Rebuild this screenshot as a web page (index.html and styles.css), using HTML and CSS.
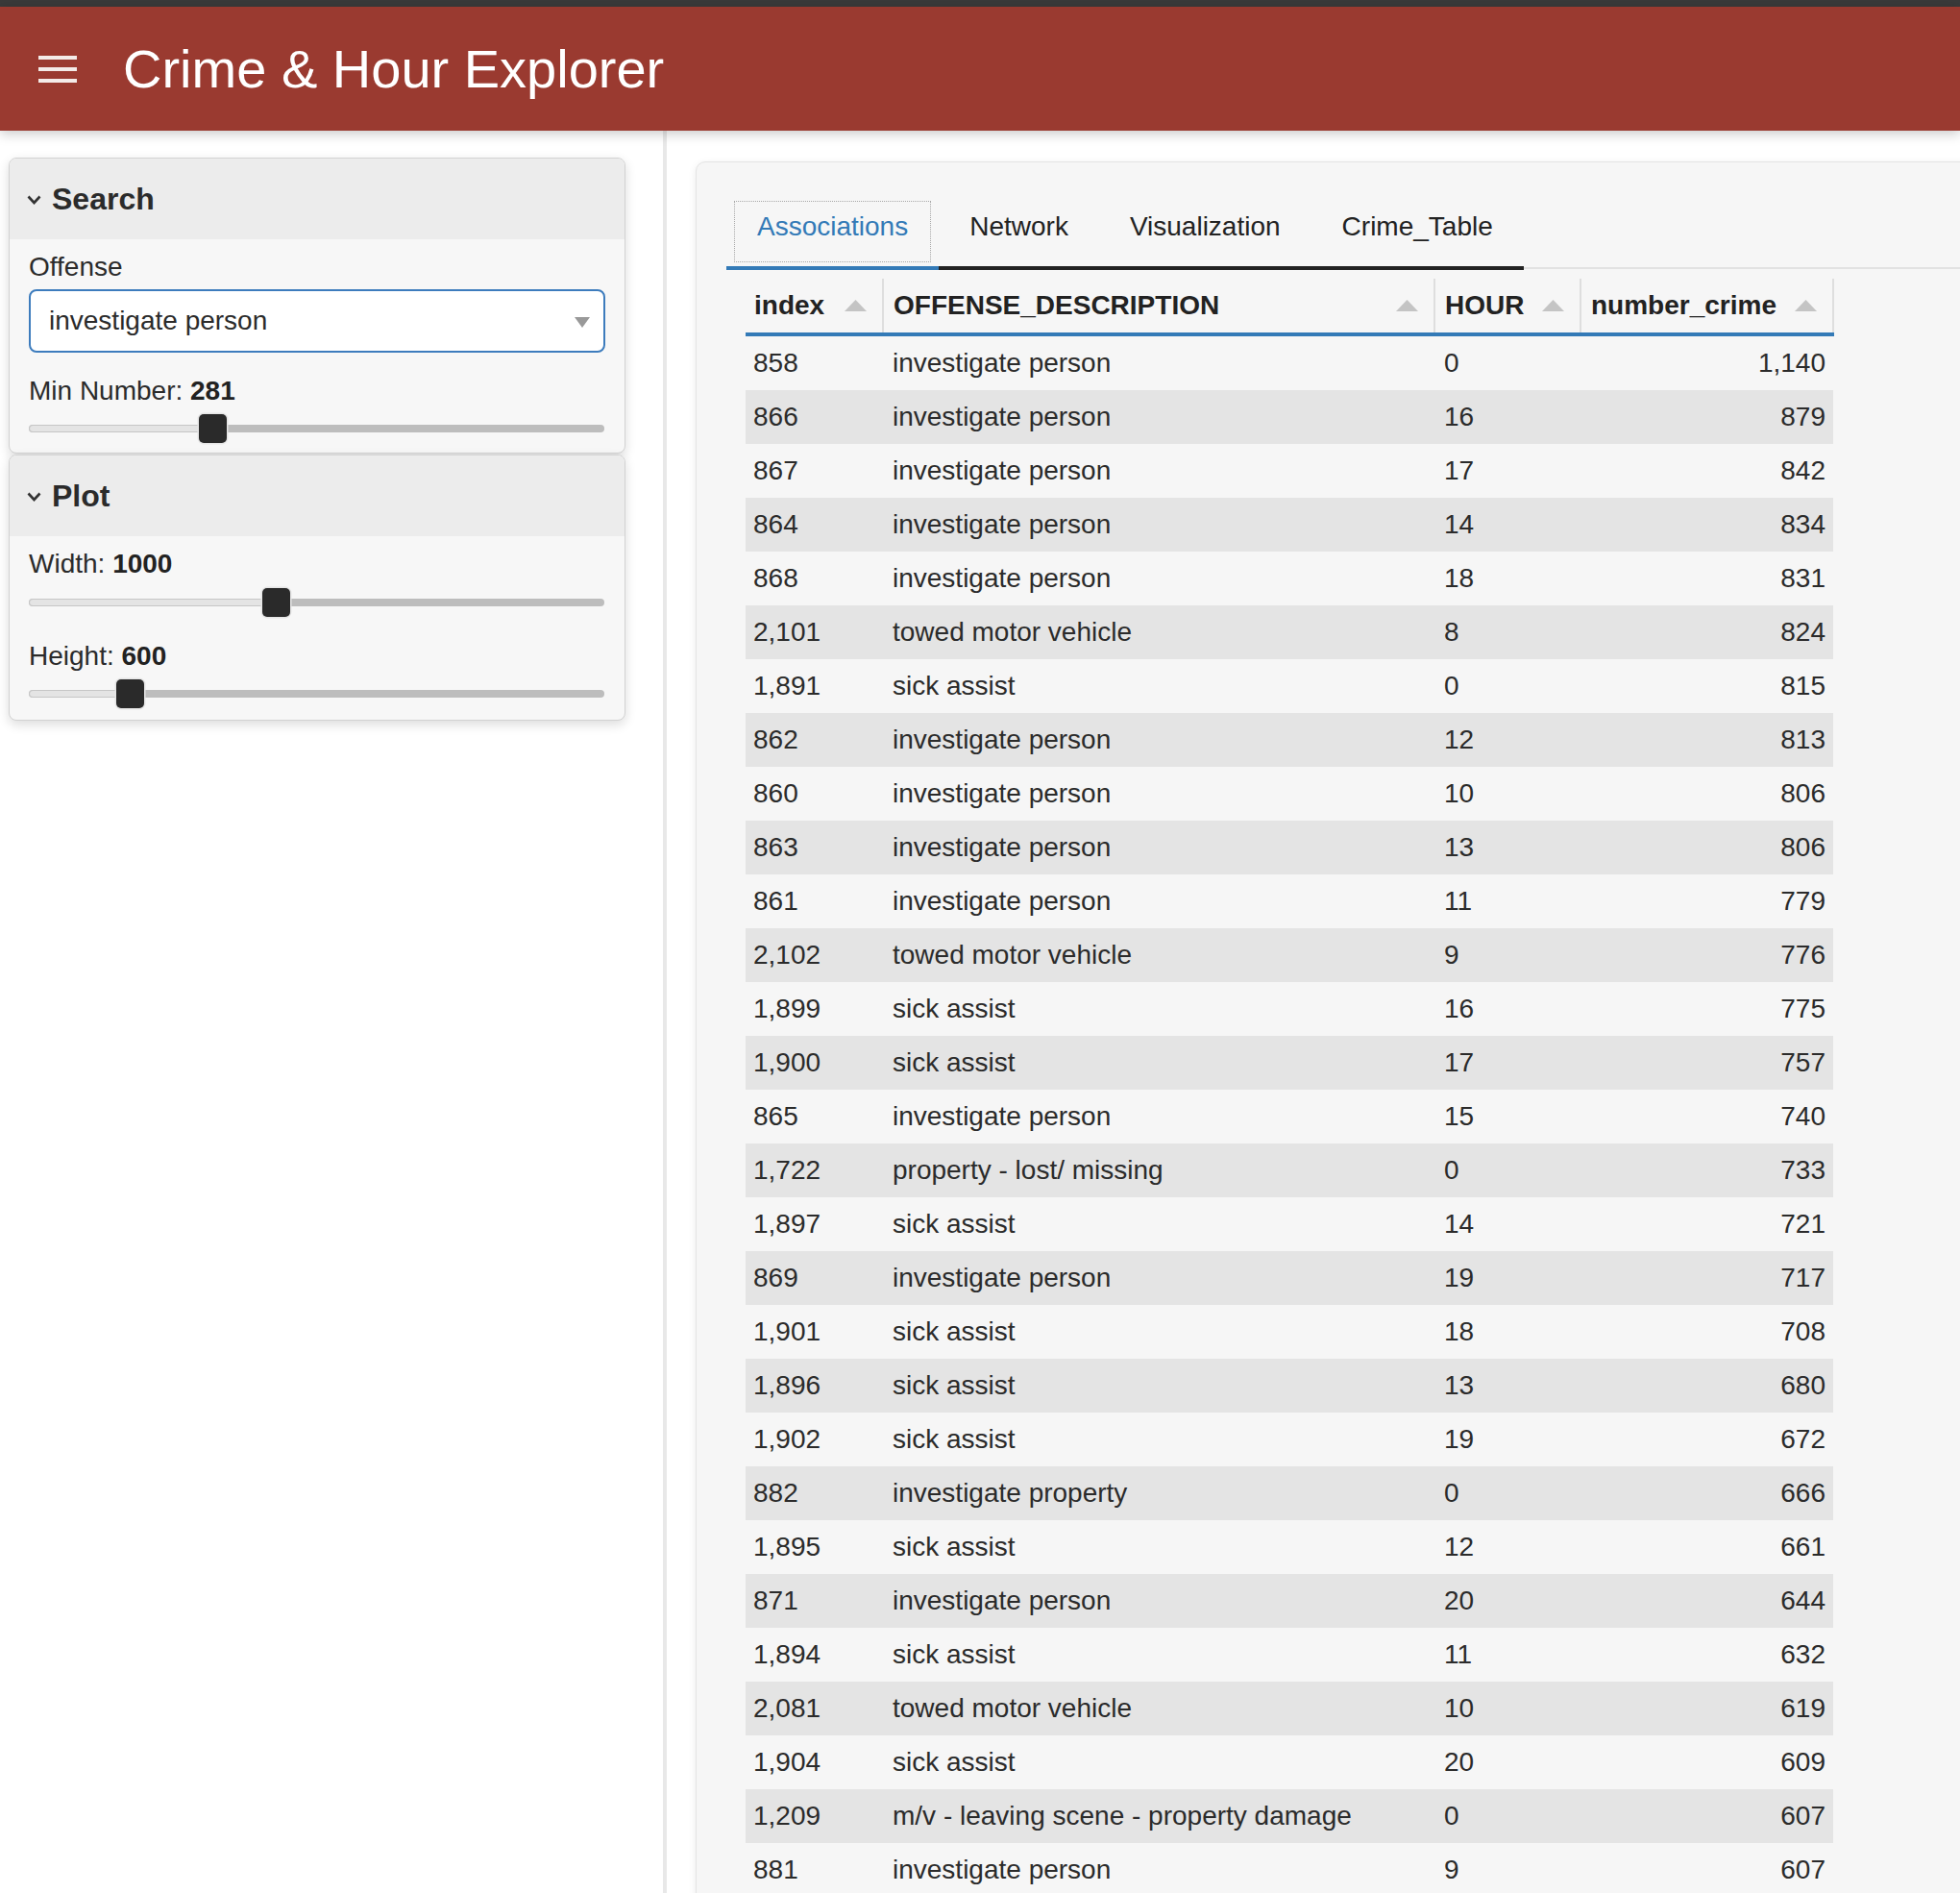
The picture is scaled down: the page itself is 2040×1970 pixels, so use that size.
FILE: index.html
```html
<!DOCTYPE html>
<html>
<head>
<meta charset="utf-8">
<title>Crime &amp; Hour Explorer</title>
<link rel="stylesheet" href="styles.css">
</head>
<body>
<div class="topbar"></div>
<header class="header">
  <div class="hamburger"><span></span><span></span><span></span></div>
  <h1 class="title">Crime &amp; Hour Explorer</h1>
</header>
<div class="layout">
  <aside class="sidebar">
    <section class="box">
      <div class="box-head">
        <svg class="chev" width="15" height="10" viewBox="0 0 15 10"><polyline points="1.5,1.5 7.5,8 13.5,1.5" fill="none" stroke="#333" stroke-width="2.6"/></svg>
        <span>Search</span>
      </div>
      <div class="box-body">
        <div class="lbl">Offense</div>
        <div class="select">
          <span>investigate person</span>
          <svg width="16" height="11" viewBox="0 0 16 11"><polygon points="0,0 16,0 8,11" fill="#999"/></svg>
        </div>
        <div class="lbl gap">Min Number: <b>281</b></div>
        <div class="slider">
          <div class="track"></div>
          <div class="fill" style="width:190px"></div>
          <div class="thumb" style="left:177px"></div>
        </div>
      </div>
    </section>
    <section class="box">
      <div class="box-head">
        <svg class="chev" width="15" height="10" viewBox="0 0 15 10"><polyline points="1.5,1.5 7.5,8 13.5,1.5" fill="none" stroke="#333" stroke-width="2.6"/></svg>
        <span>Plot</span>
      </div>
      <div class="box-body plot-body">
        <div class="lbl">Width: <b>1000</b></div>
        <div class="slider s2">
          <div class="track"></div>
          <div class="fill" style="width:256px"></div>
          <div class="thumb" style="left:243px"></div>
        </div>
        <div class="lbl gap2">Height: <b>600</b></div>
        <div class="slider">
          <div class="track"></div>
          <div class="fill" style="width:104px"></div>
          <div class="thumb" style="left:91px"></div>
        </div>
      </div>
    </section>
  </aside>
  <main class="main">
    <div class="card">
      <ul class="tabs">
        <li class="tab active"><a>Associations</a></li>
        <li class="tab"><a>Network</a></li>
        <li class="tab"><a>Visualization</a></li>
        <li class="tab"><a>Crime_Table</a></li>
      </ul>
      <div class="tab-content">
        <table class="dt">
          <colgroup>
            <col class="c1"><col class="c2"><col class="c3"><col class="c4">
          </colgroup>
          <thead>
            <tr>
              <th class="p1"><div class="thc"><span>index</span><svg width="23" height="12" viewBox="0 0 23 12"><polygon points="0,12 23,12 11.5,0" fill="#c4c4c4"/></svg></div></th>
              <th><div class="thc"><span>OFFENSE_DESCRIPTION</span><svg width="23" height="12" viewBox="0 0 23 12"><polygon points="0,12 23,12 11.5,0" fill="#c4c4c4"/></svg></div></th>
              <th><div class="thc"><span>HOUR</span><svg width="23" height="12" viewBox="0 0 23 12"><polygon points="0,12 23,12 11.5,0" fill="#c4c4c4"/></svg></div></th>
              <th><div class="thc"><span>number_crime</span><svg width="23" height="12" viewBox="0 0 23 12"><polygon points="0,12 23,12 11.5,0" fill="#c4c4c4"/></svg></div></th>
            </tr>
          </thead>
          <tbody>
            <tr><td>858</td><td>investigate person</td><td>0</td><td>1,140</td></tr>
            <tr><td>866</td><td>investigate person</td><td>16</td><td>879</td></tr>
            <tr><td>867</td><td>investigate person</td><td>17</td><td>842</td></tr>
            <tr><td>864</td><td>investigate person</td><td>14</td><td>834</td></tr>
            <tr><td>868</td><td>investigate person</td><td>18</td><td>831</td></tr>
            <tr><td>2,101</td><td>towed motor vehicle</td><td>8</td><td>824</td></tr>
            <tr><td>1,891</td><td>sick assist</td><td>0</td><td>815</td></tr>
            <tr><td>862</td><td>investigate person</td><td>12</td><td>813</td></tr>
            <tr><td>860</td><td>investigate person</td><td>10</td><td>806</td></tr>
            <tr><td>863</td><td>investigate person</td><td>13</td><td>806</td></tr>
            <tr><td>861</td><td>investigate person</td><td>11</td><td>779</td></tr>
            <tr><td>2,102</td><td>towed motor vehicle</td><td>9</td><td>776</td></tr>
            <tr><td>1,899</td><td>sick assist</td><td>16</td><td>775</td></tr>
            <tr><td>1,900</td><td>sick assist</td><td>17</td><td>757</td></tr>
            <tr><td>865</td><td>investigate person</td><td>15</td><td>740</td></tr>
            <tr><td>1,722</td><td>property - lost/ missing</td><td>0</td><td>733</td></tr>
            <tr><td>1,897</td><td>sick assist</td><td>14</td><td>721</td></tr>
            <tr><td>869</td><td>investigate person</td><td>19</td><td>717</td></tr>
            <tr><td>1,901</td><td>sick assist</td><td>18</td><td>708</td></tr>
            <tr><td>1,896</td><td>sick assist</td><td>13</td><td>680</td></tr>
            <tr><td>1,902</td><td>sick assist</td><td>19</td><td>672</td></tr>
            <tr><td>882</td><td>investigate property</td><td>0</td><td>666</td></tr>
            <tr><td>1,895</td><td>sick assist</td><td>12</td><td>661</td></tr>
            <tr><td>871</td><td>investigate person</td><td>20</td><td>644</td></tr>
            <tr><td>1,894</td><td>sick assist</td><td>11</td><td>632</td></tr>
            <tr><td>2,081</td><td>towed motor vehicle</td><td>10</td><td>619</td></tr>
            <tr><td>1,904</td><td>sick assist</td><td>20</td><td>609</td></tr>
            <tr><td>1,209</td><td>m/v - leaving scene - property damage</td><td>0</td><td>607</td></tr>
            <tr><td>881</td><td>investigate person</td><td>9</td><td>607</td></tr>
          </tbody>
        </table>
      </div>
    </div>
  </main>
</div>
</body>
</html>
```

FILE: styles.css
```css
html, body {
  margin: 0;
  padding: 0;
}
body {
  background: #ffffff;
  font-family: "Liberation Sans", Arial, Helvetica, sans-serif;
  font-size: 28px;
  line-height: 40px;
  color: #333333;
  overflow: hidden;
}
.topbar {
  height: 7px;
  background: #3a3a3a;
}
.header {
  position: relative;
  z-index: 2;
  height: 129px;
  background: #9a3a30;
  display: flex;
  align-items: center;
  box-shadow: 0 3px 12px rgba(0, 0, 0, 0.22);
}
.hamburger {
  margin-left: 40px;
  width: 40px;
  display: flex;
  flex-direction: column;
  gap: 8px;
  margin-top: 1px;
}
.hamburger span {
  display: block;
  height: 4px;
  background: #f4ebe8;
}
.title {
  margin: 0 0 0 48px;
  font-size: 56px;
  font-weight: normal;
  line-height: 64px;
  color: #ffffff;
}
.layout {
  display: flex;
  min-height: 1834px;
}
.sidebar {
  width: 694px;
  flex: none;
  border-right: 4px solid #e8e8e8;
  padding: 28px 0 0 9px;
  box-sizing: border-box;
}
.box {
  width: 642px;
  box-sizing: border-box;
  border: 1px solid #d2d2d2;
  border-radius: 8px;
  background: #f7f7f7;
  box-shadow: 0 4px 12px rgba(0, 0, 0, 0.14);
  overflow: hidden;
}
.box + .box {
  margin-top: 1px;
}
.box-head {
  height: 84px;
  background: #ececec;
  display: flex;
  align-items: center;
  font-size: 32px;
  font-weight: bold;
  color: #2b2b2b;
}
.chev {
  margin-left: 18px;
  margin-right: 11px;
  margin-top: 2px;
}
.box-body {
  padding: 9px 20px 10px 20px;
}
.plot-body {
  padding-bottom: 12px;
}
.lbl {
  height: 40px;
  color: #2b2b2b;
}
.lbl b {
  color: #222222;
}
.gap {
  margin-top: 20px;
}
.gap2 {
  margin-top: 21px;
}
.select {
  margin-top: 3px;
  height: 66px;
  box-sizing: border-box;
  border: 2px solid #3d7cbd;
  border-radius: 8px;
  background: #ffffff;
  display: flex;
  align-items: center;
  justify-content: space-between;
  padding: 0 14px 0 19px;
  color: #2b2b2b;
}
.select svg {
  margin-top: 2px;
}
.slider {
  position: relative;
  margin-top: 4px;
  height: 30px;
  width: 599px;
}
.s2 {
  margin-top: 5px;
}
.track {
  position: absolute;
  left: 0;
  right: 0;
  top: 11px;
  height: 8px;
  border-radius: 4px;
  background: #bdbdbd;
}
.fill {
  position: absolute;
  left: 0;
  top: 11px;
  height: 8px;
  box-sizing: border-box;
  border: 1px solid #c6c6c6;
  border-radius: 4px;
  background: #e4e4e4;
}
.thumb {
  position: absolute;
  top: 0;
  width: 29px;
  height: 30px;
  box-sizing: border-box;
  border-radius: 5px;
  background: #2a2a2a;
  box-shadow: 0 0 0 1.5px #e6e6e6;
}
.main {
  flex: 1;
  padding: 32px 0 0 30px;
  min-width: 0;
}
.card {
  width: 1400px;
  min-height: 1840px;
  box-sizing: border-box;
  background: #f6f6f6;
  border: 1px solid #e4e4e4;
  border-radius: 10px;
  box-shadow: 0 2px 8px rgba(0, 0, 0, 0.08);
  padding: 40px 0 0 31px;
}
.tabs {
  list-style: none;
  margin: 0;
  padding: 0;
  display: flex;
  border-bottom: 2px solid #e2e2e2;
}
.tab {
  padding: 0 8px 4px 8px;
  border-bottom: 4px solid #222222;
  margin-bottom: -3px;
}
.tab a {
  display: block;
  padding: 6px 23px 16px 23px;
  border: 1px solid transparent;
  color: #222222;
}
.tab.active {
  border-bottom-color: #337ab7;
}
.tab.active a {
  border: 1px dotted #a8a8a8;
  color: #337ab7;
}
.tab-content {
  padding: 10px 0 0 20px;
}
.dt {
  border-collapse: collapse;
  table-layout: fixed;
  width: 1132px;
}
.c1 { width: 143px; }
.c2 { width: 574px; }
.c3 { width: 152px; }
.c4 { width: 263px; }
.dt th {
  height: 56px;
  padding: 0 8px 0 10px;
  text-align: left;
  font-weight: bold;
  color: #222222;
  border-bottom: 4px solid #337ab7;
  border-right: 2px solid #dedede;
  box-sizing: content-box;
}
.dt th.p1 {
  padding-left: 9px;
}
.thc {
  display: flex;
  align-items: center;
  justify-content: space-between;
}
.thc svg {
  margin-right: 8px;
  flex: none;
}
.dt td {
  height: 56px;
  padding: 0 8px 0 10px;
  white-space: nowrap;
  color: #2b2b2b;
}
.dt td:first-child {
  padding-left: 8px;
}
.dt td:last-child {
  text-align: right;
}
.dt tbody tr:nth-child(even) {
  background: #e4e4e4;
}
```
